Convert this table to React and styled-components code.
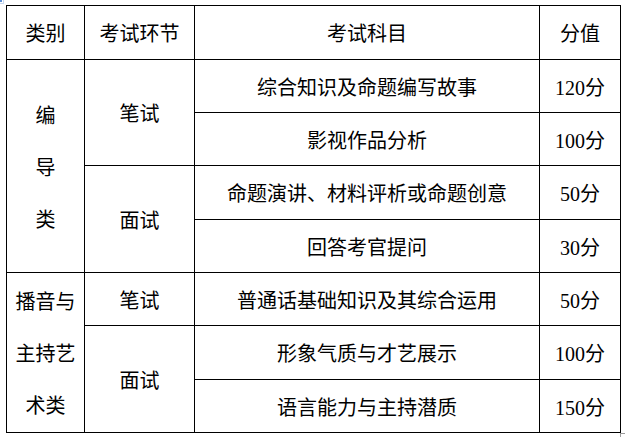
import styled, { createGlobalStyle } from 'styled-components'

const GlobalStyle = createGlobalStyle`
  html, body {
    margin: 0;
    padding: 0;
    background: #fff;
  }
  body {
    font-family: "Liberation Serif", "Noto Sans CJK SC", serif;
    color: #000;
  }
`

const exams = [
  {
    category: ['编', '导', '类'],
    stages: [
      { name: '笔试', subjects: [['综合知识及命题编写故事', '120分'], ['影视作品分析', '100分']] },
      { name: '面试', subjects: [['命题演讲、材料评析或命题创意', '50分', true], ['回答考官提问', '30分']] },
    ],
  },
  {
    category: ['播音与', '主持艺', '术类'],
    stages: [
      { name: '笔试', subjects: [['普通话基础知识及其综合运用', '50分']] },
      { name: '面试', subjects: [['形象气质与才艺展示', '100分'], ['语言能力与主持潜质', '150分']] },
    ],
  },
]

const App = () => {
  return (
    <>
      <GlobalStyle />
      <Page>
        <MoveHandle>
          <svg width="8" height="8" viewBox="0 0 8 8">
            <rect x="-4" y="-4" width="7.5" height="7.5" fill="none" stroke="#8fb0e0" strokeDasharray="1 1" />
            <rect x="0" y="0" width="2" height="2" fill="#5b8fd6" />
          </svg>
        </MoveHandle>
        <Table>
          <colgroup>
            <col style={{ width: 78 }} />
            <col style={{ width: 110 }} />
            <col style={{ width: 345 }} />
            <col style={{ width: 81 }} />
          </colgroup>
          <thead>
            <Row $tall>
              <Cell as="th">类别</Cell>
              <Cell as="th">考试环节</Cell>
              <Cell as="th">考试科目</Cell>
              <Cell as="th">分值</Cell>
            </Row>
          </thead>
          <tbody>
            {exams.map((group) => {
              const total = group.stages.reduce((n, s) => n + s.subjects.length, 0)
              return group.stages.map((stage, si) =>
                stage.subjects.map(([subject, score, tall], ri) => (
                  <Row key={subject} $tall={tall}>
                    {si === 0 && ri === 0 && (
                      <Cell rowSpan={total}>
                        {group.category.map((line) => (
                          <CategoryLine key={line}>{line}</CategoryLine>
                        ))}
                      </Cell>
                    )}
                    {ri === 0 && <Cell rowSpan={stage.subjects.length}>{stage.name}</Cell>}
                    <Cell>{subject}</Cell>
                    <Cell>{score}</Cell>
                  </Row>
                ))
              )
            })}
          </tbody>
        </Table>
        <ResizeHandle />
      </Page>
    </>
  )
}

const Page = styled.div`
  position: relative;
  width: 625px;
  height: 437px;
  padding: 5px 0 0 6px;
  box-sizing: border-box;
  overflow: hidden;
`

const MoveHandle = styled.div`
  position: absolute;
  left: 0;
  top: 0;
  line-height: 0;
`

const ResizeHandle = styled.div`
  position: absolute;
  left: 620px;
  top: 433px;
  width: 7px;
  height: 7px;
  border: 1px solid #9a9a9a;
  box-sizing: border-box;
`

const Table = styled.table`
  border-collapse: collapse;
  table-layout: fixed;
  width: 614px;
`

const Row = styled.tr`
  height: ${(p) => (p.$tall ? 54 : 53)}px;
`

const Cell = styled.td`
  border: 1px solid #000;
  padding: 3px 0 0;
  text-align: center;
  vertical-align: middle;
  font-size: 20px;
  font-weight: normal;
  line-height: 24px;
`

const CategoryLine = styled.div`
  line-height: 52px;
`

export default App
